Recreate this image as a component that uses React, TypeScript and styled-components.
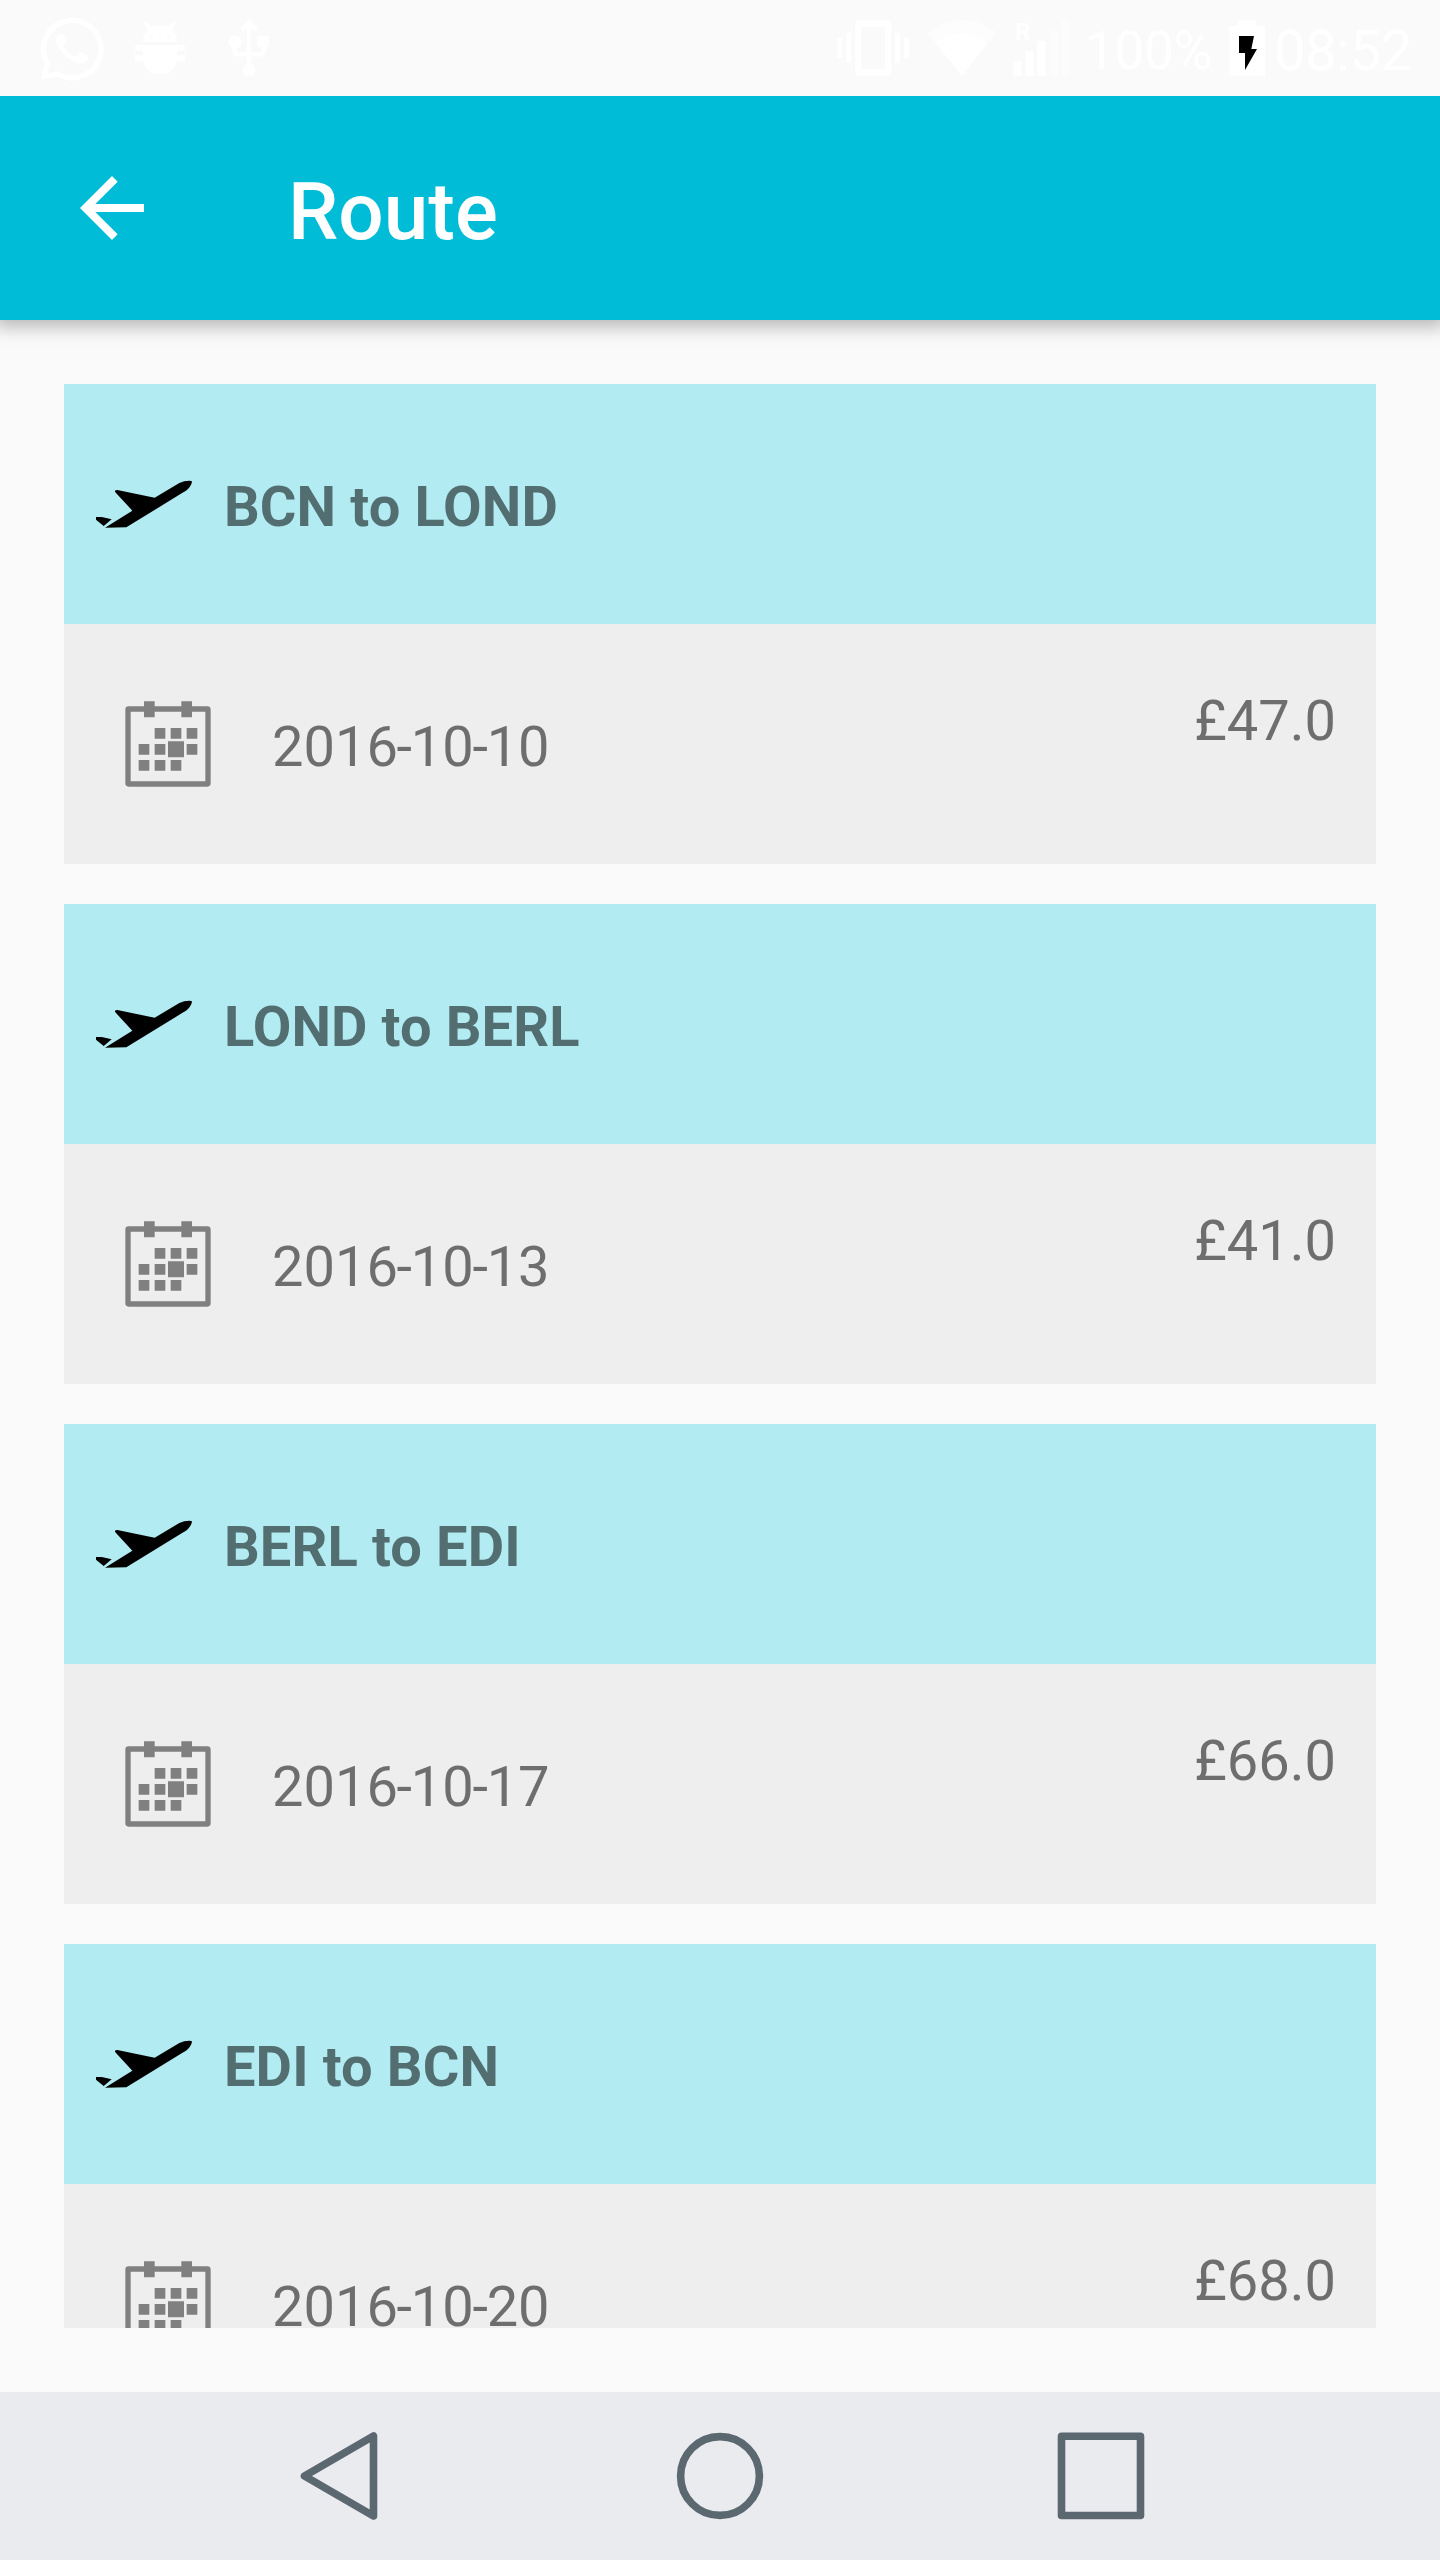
import React from "react";
import styled, { createGlobalStyle } from "styled-components";

const GlobalStyle = createGlobalStyle`
  *, *::before, *::after { box-sizing: border-box; }
  html, body { margin: 0; padding: 0; background: #fafafa; }
  body { font-family: Roboto, "Liberation Sans", sans-serif; }
`;

const Screen = styled.div`
  display: flex;
  flex-direction: column;
  width: 1440px;
  height: 2560px;
  overflow: hidden;
  background: #fafafa;
`;

const StatusBar = styled.header`
  flex: none;
  z-index: 2;
  height: 96px;
  display: flex;
  align-items: center;
  justify-content: space-between;
  padding: 0 28px 0 40px;
  background: #fafafa;
  color: #fff;
`;

const StatusGroup = styled.div`
  display: flex;
  align-items: center;
`;

const Glyph = styled.svg<{ $w: number; $h?: number; $ml?: number }>`
  flex: none;
  display: block;
  width: ${(p) => p.$w}px;
  height: ${(p) => p.$h ?? 96}px;
  margin-left: ${(p) => p.$ml ?? 0}px;
`;

const StatusText = styled.span<{ $size: number; $w: number; $top: number; $ml: number }>`
  font-size: ${(p) => p.$size}px;
  line-height: 66px;
  letter-spacing: -0.3px;
  width: ${(p) => p.$w}px;
  margin-left: ${(p) => p.$ml}px;
  padding-top: ${(p) => p.$top}px;
  white-space: nowrap;
`;

const AppBar = styled.div`
  flex: none;
  z-index: 1;
  height: 224px;
  display: flex;
  align-items: center;
  padding: 0 64px;
  background: #00bcd7;
  color: #fff;
  box-shadow: 0 0 18px 6px rgba(0, 0, 0, 0.29);
`;

const BackButton = styled.button`
  width: 96px;
  height: 96px;
  padding: 0;
  border: 0;
  background: none;
`;

const Title = styled.h1`
  margin: 0 0 0 128px;
  padding-top: 7px;
  font-size: 80px;
  line-height: 94px;
  font-weight: 500;
`;

const RouteList = styled.main`
  flex: 1;
  min-height: 0;
  margin: 64px;
  display: flex;
  flex-direction: column;
  gap: 40px;
  overflow: hidden;
`;

const Card = styled.section`
  flex: none;
  display: flex;
  flex-direction: column;
`;

const CardHeader = styled.div`
  height: 240px;
  display: flex;
  align-items: center;
  gap: 32px;
  padding: 0 32px;
  background: #b2ebf2;
`;

const Leg = styled.h2`
  margin: 0;
  padding-top: 6px;
  font-size: 56px;
  line-height: 66px;
  font-weight: 700;
  letter-spacing: 0.12px;
  color: #536e71;
`;

const CardBody = styled.div`
  height: 240px;
  display: flex;
  align-items: center;
  padding: 0 40px 0 56px;
  background: #eee;
  color: #6e6e6e;
  font-size: 56px;
  line-height: 66px;
`;

const FlightDate = styled.span`
  margin-left: 56px;
  padding-top: 6px;
  white-space: nowrap;
`;

const Hyphen = styled.span`
  margin: 0 -1.3px;
`;

const Price = styled.span`
  align-self: flex-start;
  margin: 64px 0 0 auto;
`;

const NavBar = styled.nav`
  flex: none;
  height: 168px;
  display: flex;
  align-items: center;
  justify-content: space-between;
  padding: 0 284px;
  background: #e9ebef;
`;

const NavButton = styled.button`
  width: 112px;
  height: 112px;
  padding: 0;
  border: 0;
  background: none;
`;

const WhatsappIcon = () => (
  <Glyph $w={64} viewBox="120 0 192 288" fill="none">
    <path d="M133 229 L142 190 A86 86 0 1 1 174 222 Z" stroke="#fff" strokeWidth="16" />
    <path
      d="M176 103 Q184 98 190 103 L199 122 Q200 127 190 138 Q202 161 225 170 L236 157 Q240 154 246 157 L263 167 Q266 184 250 188 Q228 192 202 172 Q177 152 169 129 Q166 113 176 103Z"
      fill="#fff"
    />
  </Glyph>
);

const BugIcon = () => (
  <Glyph $w={50} $ml={31} viewBox="405 0 150 288" fill="#fff">
    <path
      fillRule="evenodd"
      d="M429 126 Q429 100 445 87 L433 73 Q431 68 436 67 Q441 65 444 69 L454 81 Q480 70 506 81 L515 69 Q518 65 524 67 Q529 69 527 73 L515 87 Q531 100 531 126Z M454 104a5 5 0 1 0 0 10a5 5 0 1 0 0-10Z M506 104a5 5 0 1 0 0 10a5 5 0 1 0 0-10Z"
    />
    <path d="M409 135 H551 Q555 135 555 139 V149 Q555 153 551 153 H531 V165 H551 Q555 165 555 169 V178 Q555 182 551 182 H529 Q524 222 480 222 Q436 222 431 182 H409 Q405 182 405 178 V169 Q405 165 409 165 H429 V153 H409 Q405 153 405 149 V139 Q405 135 409 135Z" />
  </Glyph>
);

const UsbIcon = () => (
  <Glyph $w={42} $ml={43} viewBox="683 0 126 288" fill="none">
    <path d="M746 68 V200 M724 91 L746 67 L768 91" stroke="#fff" strokeWidth="13" />
    <path d="M703 130 V153 Q703 163 713 163 H779 Q789 163 789 153 V130" stroke="#fff" strokeWidth="13" />
    <circle cx="704" cy="125" r="20" fill="#fff" />
    <circle cx="746" cy="210" r="19" fill="#fff" />
    <path d="M771 108 H806 V141 H771Z" fill="#fff" />
  </Glyph>
);

const VibrateIcon = () => (
  <Glyph $w={73} viewBox="113 0 219 288" fill="#fff">
    <path d="M113 114h16v60h-16z M141 98h15v91h-15z M287 98h16v91h-16z M315 114h15v60h-15z" />
    <path
      fillRule="evenodd"
      d="M178 60 H266 Q276 60 276 70 V218 Q276 228 266 228 H178 Q168 228 168 218 V70 Q168 60 178 60Z M186 81 V207 H258 V81Z"
    />
  </Glyph>
);

const WifiIcon = () => (
  <Glyph $w={70} $ml={17} viewBox="382 0 210 288" fill="#fff">
    <path opacity="0.5" d="M486 228 L383 98 Q430 60 486 60 Q542 60 591 98Z" />
    <path d="M486 228 L408 128 Q442 101 486 101 Q530 101 564 128Z" />
  </Glyph>
);

const SignalIcon = () => (
  <Glyph $w={57} $ml={16} viewBox="640 0 171 288" fill="#fff">
    <path opacity="0.4" d="M750 91h25v137h-25z M786 60h25v168h-25z" />
    <path d="M641 183h25v45h-25z M678 153h25v75h-25z M713 123h25v105h-25z" />
    <text x="647" y="120" fontSize="71" fontWeight="700" fontFamily="Roboto, sans-serif">
      R
    </text>
  </Glyph>
);

const BatteryIcon = () => (
  <Glyph $w={36} $ml={0} viewBox="387 0 108 288">
    <path fill="#fff" d="M414 60 H468 V78 H495 V228 H387 V78 H414Z" />
    <path d="M417 108 H462 L454 147 H471 L435 210 V159 H417Z" />
  </Glyph>
);

const BackIcon = () => (
  <Glyph $w={96} $h={96} viewBox="0 0 24 24" fill="#fff">
    <path d="M20 11H7.83l5.59-5.59L12 4l-8 8 8 8 1.41-1.41L7.83 13H20v-2z" />
  </Glyph>
);

const PlaneIcon = () => (
  <Glyph $w={96} $h={96} viewBox="108 48 288 288">
    <path d="M108 231 L125 231 L155 238 L131 258 L108 239Z" />
    <path d="M135 263 L217 212 L166 157 Q162 150 172 150 L284 173 L358 129 Q376 121 395 123 Q398 131 384 147 Q379 153 370 157 L199 262Z" />
  </Glyph>
);

const CalendarIcon = () => (
  <Glyph $w={96} $h={96} viewBox="60 48 288 288" fill="#808080">
    <rect x="84" y="87" width="240" height="225" rx="2" fill="none" stroke="#808080" strokeWidth="16" />
    <path d="M132 64h32v48h-32z M244 64h32v48h-32z" />
    <path d="M164 144h32v32h-32z M212 144h32v32h-32z M260 144h32v32h-32z" />
    <path d="M116 192h32v32h-32z M164 192h32v32h-32z M204 184h48v48h-48z M260 192h32v32h-32z" />
    <path d="M116 240h32v32h-32z M164 240h32v32h-32z M212 240h32v32h-32z" />
  </Glyph>
);

const navStroke = {
  fill: "none",
  stroke: "#5b6870",
  strokeWidth: 7.6,
  strokeLinejoin: "round" as const,
};

const flights = [
  { leg: "BCN to LOND", date: "2016-10-10", price: "£47.0" },
  { leg: "LOND to BERL", date: "2016-10-13", price: "£41.0" },
  { leg: "BERL to EDI", date: "2016-10-17", price: "£66.0" },
  { leg: "EDI to BCN", date: "2016-10-20", price: "£68.0" },
];

const DateText = ({ value }: { value: string }) => (
  <FlightDate>
    {value.split("-").map((part, i) => (
      <React.Fragment key={i}>
        {i > 0 && <Hyphen>-</Hyphen>}
        {part}
      </React.Fragment>
    ))}
  </FlightDate>
);

export default function App() {
  return (
    <Screen>
      <GlobalStyle />
      <StatusBar>
        <StatusGroup>
          <WhatsappIcon />
          <BugIcon />
          <UsbIcon />
        </StatusGroup>
        <StatusGroup>
          <VibrateIcon />
          <WifiIcon />
          <SignalIcon />
          <StatusText $size={53} $w={144} $top={5} $ml={15}>
            100%
          </StatusText>
          <BatteryIcon />
          <StatusText $size={56} $w={138} $top={6} $ml={9}>
            08:52
          </StatusText>
        </StatusGroup>
      </StatusBar>
      <AppBar>
        <BackButton aria-label="Back">
          <BackIcon />
        </BackButton>
        <Title>Route</Title>
      </AppBar>
      <RouteList>
        {flights.map((f) => (
          <Card key={f.leg}>
            <CardHeader>
              <PlaneIcon />
              <Leg>{f.leg}</Leg>
            </CardHeader>
            <CardBody>
              <CalendarIcon />
              <DateText value={f.date} />
              <Price>{f.price}</Price>
            </CardBody>
          </Card>
        ))}
      </RouteList>
      <NavBar>
        <NavButton aria-label="Back">
          <Glyph $w={112} $h={112} viewBox="0 0 112 112">
            <path d="M20.5 56 L89.5 16 V96Z" {...navStroke} />
          </Glyph>
        </NavButton>
        <NavButton aria-label="Home">
          <Glyph $w={112} $h={112} viewBox="0 0 112 112">
            <circle cx="56" cy="56" r="39.4" {...navStroke} />
          </Glyph>
        </NavButton>
        <NavButton aria-label="Recent apps">
          <Glyph $w={112} $h={112} viewBox="0 0 112 112">
            <rect x="17.5" y="16.3" width="79" height="79.2" {...navStroke} />
          </Glyph>
        </NavButton>
      </NavBar>
    </Screen>
  );
}
